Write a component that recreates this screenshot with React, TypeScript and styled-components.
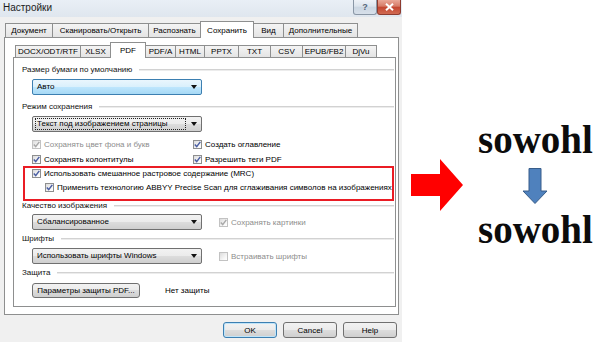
import React from 'react';
import styled, { createGlobalStyle, css } from 'styled-components';

const GlobalStyle = createGlobalStyle`
  html, body { margin: 0; padding: 0; background: #fff; }
  body { font-family: "Liberation Sans", Arial, sans-serif; }
  * { box-sizing: border-box; }
`;

const Page = styled.div`
  display: flex;
  width: 600px;
  height: 342px;
  overflow: hidden;
  background: #fff;
`;

const Dialog = styled.div`
  width: 402px;
  height: 342px;
  flex: none;
  display: flex;
  flex-direction: column;
  background: #f0f0f0;
  font-size: 8px;
  color: #000;
`;

const TitleBar = styled.div`
  height: 17px;
  display: flex;
  align-items: flex-start;
  padding: 0 1px 0 3px;
  background: linear-gradient(#e9eff6, #dfe6ee);
`;

const TitleText = styled.div`
  flex: 1;
  font-size: 10px;
  line-height: 16px;
  color: #1b1b1b;
`;

const CaptionButton = styled.div<{ $close?: boolean }>`
  width: 24px;
  height: 15px;
  display: flex;
  align-items: center;
  justify-content: center;
  border: 1px solid ${(p) => (p.$close ? '#8d3b2f' : '#8a97a6')};
  border-top: none;
  border-radius: 0 0 3px 3px;
  font-size: 9px;
  font-weight: bold;
  color: #56667a;
  background: ${(p) =>
    p.$close
      ? 'linear-gradient(#eaa898 0%, #d67a66 45%, #c4452f 50%, #d06a52 100%)'
      : 'linear-gradient(#eef2f7 0%, #dce4ed 45%, #cbd6e2 50%, #d7e0ea 100%)'};
`;

const TabStrip = styled.div<{ $h: number; $inset: number; $mt?: number }>`
  display: flex;
  align-items: flex-end;
  height: ${(p) => p.$h}px;
  margin-top: ${(p) => p.$mt ?? 0}px;
  padding-left: ${(p) => p.$inset}px;
  position: relative;
  z-index: 1;
`;

const Tab = styled.div<{ $w: number; $h: number; $active?: boolean }>`
  width: ${(p) => p.$w}px;
  height: ${(p) => p.$h}px;
  margin-left: -1px;
  flex: none;
  display: flex;
  align-items: center;
  justify-content: center;
  border: 1px solid #8e8f8f;
  border-bottom: none;
  white-space: nowrap;
  overflow: hidden;
  background: linear-gradient(#f4f4f4, #e4e4e4);
  ${(p) =>
    p.$active &&
    css`
      background: #fff;
      margin-bottom: -1px;
      position: relative;
      z-index: 1;
    `}
`;

const OuterPanel = styled.div`
  margin: 0 3px 0 4px;
  padding: 4px 2px 7px 8px;
  border: 1px solid #8e8f8f;
  background: #fff;
  display: flex;
  flex-direction: column;
`;

const InnerPanel = styled.div`
  height: 250px;
  border: 1px solid #8e8f8f;
  background: #fff;
  padding: 7px 1px 0 8px;
  display: flex;
  flex-direction: column;
`;

const GroupHead = styled.div<{ $mt?: number }>`
  display: flex;
  align-items: center;
  gap: 7px;
  height: 10px;
  line-height: 10px;
  margin-top: ${(p) => p.$mt ?? 0}px;
  white-space: nowrap;
  color: #111;
  &::after {
    content: '';
    flex: 1;
    border-top: 1px solid #d2d2d2;
    border-bottom: 1px solid #ececec;
  }
`;

const FieldRow = styled.div<{ $mt?: number }>`
  display: flex;
  align-items: center;
  margin: ${(p) => p.$mt ?? 0}px 0 0 10px;
`;

const Combo = styled.div<{ $hot?: boolean }>`
  width: 170px;
  height: 16px;
  flex: none;
  display: flex;
  align-items: center;
  padding-left: 2px;
  border: 1px solid ${(p) => (p.$hot ? '#3c7fb1' : '#707070')};
  border-radius: 2px;
  background: ${(p) =>
    p.$hot
      ? 'linear-gradient(#eaf6fd 0%, #d9f0fc 50%, #bee6fd 50%, #a7d9f5 100%)'
      : 'linear-gradient(#f2f2f2 0%, #ebebeb 50%, #dddddd 50%, #cfcfcf 100%)'};
`;

const ComboText = styled.span<{ $focus?: boolean }>`
  flex: 1;
  height: 12px;
  line-height: 10px;
  padding-left: 1px;
  border: 1px dotted ${(p) => (p.$focus ? '#222' : 'transparent')};
  white-space: nowrap;
`;

const ComboArrow = styled.span`
  width: 0;
  height: 0;
  border-left: 3px solid transparent;
  border-right: 3px solid transparent;
  border-top: 4px solid #111;
  margin: 0 4px 0 5px;
`;

const CheckGrid = styled.div`
  display: grid;
  grid-template-columns: 161px 1fr;
  grid-auto-rows: 12px;
  row-gap: 3px;
  margin: 6px 0 0 10px;
`;

const CheckItem = styled.div<{ $disabled?: boolean; $indent?: number; $h?: number }>`
  display: flex;
  align-items: center;
  gap: 3px;
  height: ${(p) => p.$h ?? 12}px;
  padding-left: ${(p) => p.$indent ?? 0}px;
  white-space: nowrap;
  color: ${(p) => (p.$disabled ? '#8d8d8d' : '#000')};
`;

const Box = styled.span<{ $disabled?: boolean }>`
  width: 9px;
  height: 9px;
  flex: none;
  display: flex;
  align-items: center;
  justify-content: center;
  border: 1px solid ${(p) => (p.$disabled ? '#c2c2c2' : '#8e8f8f')};
  background: linear-gradient(135deg, #dcdcdc, #f8f8f8 70%, #fff);
`;

const Highlight = styled.div`
  margin: 1px 0 0 1px;
  border: 2px solid #ea1c24;
  padding: 0 0 6px 7px;
  display: flex;
  flex-direction: column;
  gap: 3px;
`;

const SideCheck = styled.div`
  margin-left: 17px;
`;

const PushButton = styled.div<{ $w: number; $h?: number; $default?: boolean }>`
  width: ${(p) => p.$w}px;
  height: ${(p) => p.$h ?? 16}px;
  flex: none;
  display: flex;
  align-items: center;
  justify-content: center;
  border: 1px solid ${(p) => (p.$default ? '#3c7fb1' : '#707070')};
  border-radius: 3px;
  white-space: nowrap;
  background: linear-gradient(#f2f2f2 0%, #ebebeb 50%, #dddddd 50%, #cfcfcf 100%);
  ${(p) =>
    p.$default &&
    css`
      box-shadow: inset 0 0 0 1px #bfe4f9;
    `}
`;

const StatusText = styled.span`
  margin-left: 25px;
  white-space: nowrap;
`;

const Footer = styled.div`
  display: flex;
  justify-content: flex-end;
  gap: 6px;
  padding: 7px 5px 0 0;
`;

const Showcase = styled.div`
  flex: 1;
  display: flex;
  align-items: center;
  padding: 28px 0 0 9px;
  background: #fff;
`;

const Sample = styled.div`
  margin-left: 14px;
  display: flex;
  flex-direction: column;
  align-items: center;
`;

const SampleWord = styled.div`
  font-family: "Liberation Serif", "Times New Roman", serif;
  font-weight: bold;
  font-size: 39px;
  line-height: 40px;
  color: #0c0c0c;
`;

const DownArrow = styled.svg`
  display: block;
  margin: 8px 0 6px;
`;

function CheckMark({ disabled }: { disabled?: boolean }) {
  return (
    <svg width="7" height="7" viewBox="0 0 7 7">
      <path
        d="M0.8 3.6 L2.7 5.6 L6.3 0.9"
        fill="none"
        stroke={disabled ? '#a9a9a9' : '#4b5fa3'}
        strokeWidth="1.5"
      />
    </svg>
  );
}

function CheckBox({
  label,
  checked,
  disabled,
  indent,
  h,
}: {
  label: string;
  checked?: boolean;
  disabled?: boolean;
  indent?: number;
  h?: number;
}) {
  return (
    <CheckItem $disabled={disabled} $indent={indent} $h={h}>
      <Box $disabled={disabled}>{checked && <CheckMark disabled={disabled} />}</Box>
      {label}
    </CheckItem>
  );
}

function Select({ value, hot, focus }: { value: string; hot?: boolean; focus?: boolean }) {
  return (
    <Combo $hot={hot}>
      <ComboText $focus={focus}>{value}</ComboText>
      <ComboArrow />
    </Combo>
  );
}

const mainTabs: [string, number][] = [
  ['Документ', 48],
  ['Сканировать/Открыть', 97],
  ['Распознать', 53],
  ['Сохранить', 54],
  ['Вид', 31],
  ['Дополнительные', 75],
];

const formatTabs: [string, number][] = [
  ['DOCX/ODT/RTF', 66],
  ['XLSX', 31],
  ['PDF', 36],
  ['PDF/A', 31],
  ['HTML', 30],
  ['PPTX', 35],
  ['TXT', 33],
  ['CSV', 33],
  ['EPUB/FB2', 44],
  ['DjVu', 32],
];

export default function App() {
  return (
    <>
      <GlobalStyle />
      <Page>
        <Dialog>
          <TitleBar>
            <TitleText>Настройки</TitleText>
            <CaptionButton>?</CaptionButton>
            <CaptionButton $close>
              <svg width="9" height="8" viewBox="0 0 9 8">
                <path d="M1 0.8 L8 7.2 M8 0.8 L1 7.2" stroke="#fff" strokeWidth="2" />
              </svg>
            </CaptionButton>
          </TitleBar>

          <TabStrip $h={16} $inset={6} $mt={4}>
            {mainTabs.map(([name, w]) => (
              <Tab key={name} $w={w} $h={name === 'Сохранить' ? 17 : 14} $active={name === 'Сохранить'}>
                {name}
              </Tab>
            ))}
          </TabStrip>

          <OuterPanel>
            <TabStrip $h={15} $inset={3}>
              {formatTabs.map(([name, w]) => (
                <Tab key={name} $w={w} $h={name === 'PDF' ? 16 : 12} $active={name === 'PDF'}>
                  {name}
                </Tab>
              ))}
            </TabStrip>

            <InnerPanel>
              <GroupHead>Размер бумаги по умолчанию</GroupHead>
              <FieldRow $mt={4}>
                <Select value="Авто" hot />
              </FieldRow>

              <GroupHead $mt={7}>Режим сохранения</GroupHead>
              <FieldRow $mt={4}>
                <Select value="Текст под изображением страницы" focus />
              </FieldRow>

              <CheckGrid>
                <CheckBox label="Сохранять цвет фона и букв" checked disabled />
                <CheckBox label="Создать оглавление" checked />
                <CheckBox label="Сохранять колонтитулы" checked />
                <CheckBox label="Разрешить теги PDF" checked />
              </CheckGrid>

              <Highlight>
                <CheckBox label="Использовать смешанное растровое содержание (MRC)" checked h={11} />
                <CheckBox
                  label="Применить технологию ABBYY Precise Scan для сглаживания символов на изображениях"
                  checked
                  indent={13}
                  h={11}
                />
              </Highlight>

              <GroupHead>Качество изображения</GroupHead>
              <FieldRow $mt={3}>
                <Select value="Сбалансированное" />
                <SideCheck>
                  <CheckBox label="Сохранять картинки" checked disabled />
                </SideCheck>
              </FieldRow>

              <GroupHead $mt={4}>Шрифты</GroupHead>
              <FieldRow $mt={4}>
                <Select value="Использовать шрифты Windows" />
                <SideCheck>
                  <CheckBox label="Встраивать шрифты" disabled />
                </SideCheck>
              </FieldRow>

              <GroupHead $mt={4}>Защита</GroupHead>
              <FieldRow $mt={5}>
                <PushButton $w={108} $h={15}>
                  Параметры защиты PDF...
                </PushButton>
                <StatusText>Нет защиты</StatusText>
              </FieldRow>
            </InnerPanel>
          </OuterPanel>

          <Footer>
            <PushButton $w={54} $default>
              OK
            </PushButton>
            <PushButton $w={54}>Cancel</PushButton>
            <PushButton $w={54}>Help</PushButton>
          </Footer>
        </Dialog>

        <Showcase>
          <svg width="53" height="53" viewBox="0 0 53 53">
            <polygon points="0,15 29,15 29,0 52,26 29,52 29,37 0,37" fill="#ff0000" />
          </svg>
          <Sample>
            <SampleWord>sowohl</SampleWord>
            <DownArrow width="26" height="36" viewBox="0 0 26 36">
              <polygon
                points="7,0.5 19,0.5 19,23 25,23 13,35.5 1,23 7,23"
                fill="#4f81bd"
                stroke="#385d8a"
                strokeWidth="1"
              />
            </DownArrow>
            <SampleWord>sowohl</SampleWord>
          </Sample>
        </Showcase>
      </Page>
    </>
  );
}
